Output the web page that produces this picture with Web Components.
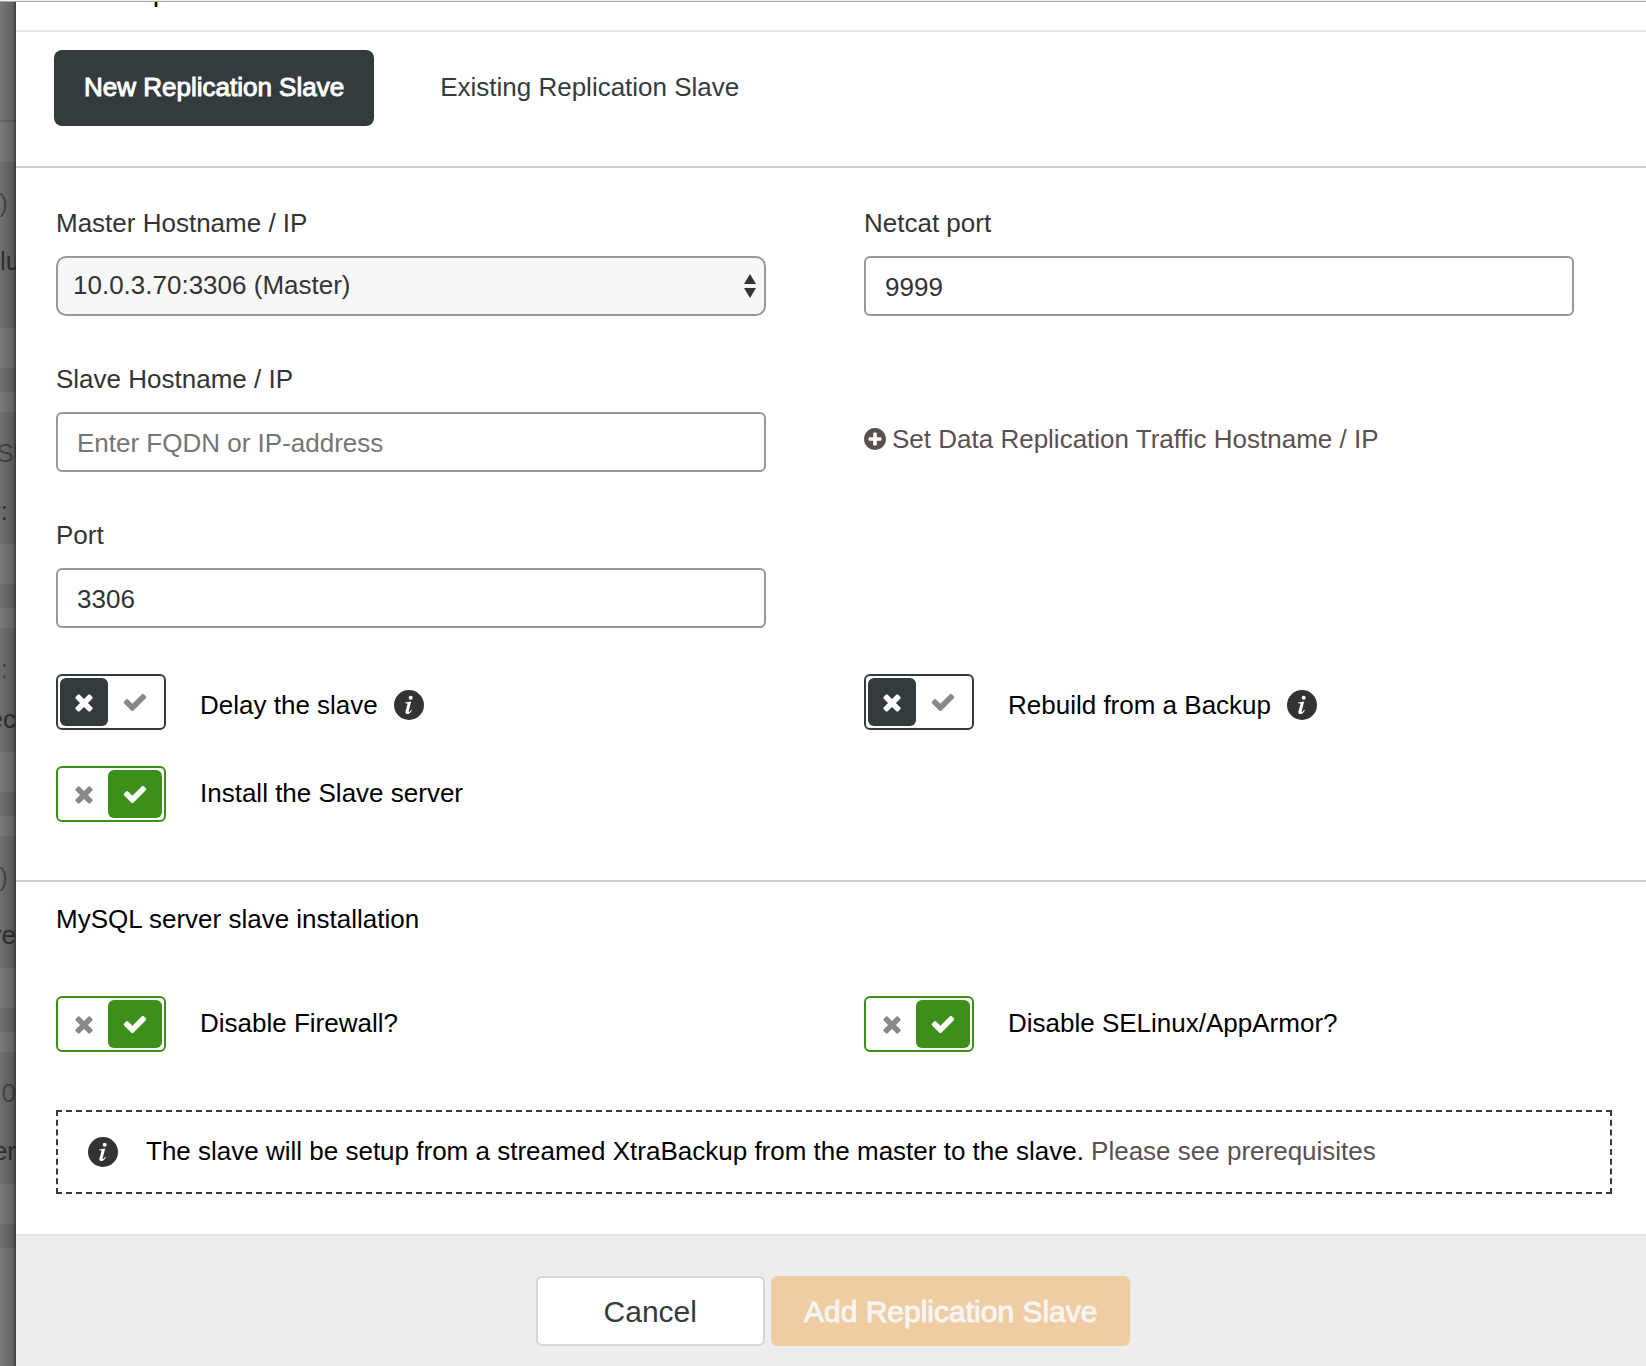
<!DOCTYPE html>
<html lang="en">
<head>
<meta charset="utf-8">
<title>Add Replication Slave</title>
<style>
  html, body { margin: 0; }
  body {
    min-height: 100vh;
    font: 26px/30px "Liberation Sans", Arial, sans-serif;
    color: #000;
    background: #fff;
  }
</style>
</head>
<body>
<replication-page>
  <backdrop-strip slot="behind"></backdrop-strip>
  <modal-panel>
    <span slot="title">Add Replication Slave</span>
    <tab-bar slot="tabs"></tab-bar>

    <form-section class="main">
      <field-grid>
        <select-field label="Master Hostname / IP" value="10.0.3.70:3306 (Master)"></select-field>
        <text-field label="Netcat port" value="9999"></text-field>
        <text-field label="Slave Hostname / IP" placeholder="Enter FQDN or IP-address"></text-field>
        <add-link>Set Data Replication Traffic Hostname / IP</add-link>
        <text-field label="Port" value="3306"></text-field>
      </field-grid>
      <toggle-grid>
        <toggle-switch info>Delay the slave</toggle-switch>
        <toggle-switch info>Rebuild from a Backup</toggle-switch>
        <toggle-switch checked>Install the Slave server</toggle-switch>
      </toggle-grid>
    </form-section>

    <form-section class="install" heading="MySQL server slave installation">
      <toggle-grid>
        <toggle-switch checked>Disable Firewall?</toggle-switch>
        <toggle-switch checked>Disable SELinux/AppArmor?</toggle-switch>
      </toggle-grid>
      <info-note>The slave will be setup from a streamed XtraBackup from the master to the slave. <a slot="link" href="#prerequisites">Please see prerequisites</a></info-note>
    </form-section>

    <modal-footer slot="footer"></modal-footer>
  </modal-panel>
</replication-page>

<script>
const define = (name, render) => customElements.define(name, class extends HTMLElement {
  connectedCallback() {
    if (this.shadowRoot) return;
    const root = this.attachShadow({ mode: 'open' });
    root.innerHTML = '<style>*{box-sizing:border-box}</style>' + render(this);
  }
});

const CROSS = 'M1490 1322q0 40-28 68l-136 136q-28 28-68 28t-68-28l-294-294-294 294q-28 28-68 28t-68-28l-136-136q-28-28-28-68t28-68l294-294-294-294q-28-28-28-68t28-68l136-136q28-28 68-28t68 28l294 294 294-294q28-28 68-28t68 28l136 136q28 28 28 68t-28 68l-294 294 294 294q28 28 28 68z';
const CHECK = 'M1671 566q0 40-28 68l-724 724-136 136q-28 28-68 28t-68-28l-136-136-362-362q-28-28-28-68t28-68l136-136q28-28 68-28t68 28l294 295 656-657q28-28 68-28t68 28l136 136q28 28 28 68z';
const PLUS = 'M1344 960v-128q0-26-19-45t-45-19h-256v-256q0-26-19-45t-45-19h-128q-26 0-45 19t-19 45v256h-256q-26 0-45 19t-19 45v128q0 26 19 45t45 19h256v256q0 26 19 45t45 19h128q26 0 45-19t19-45v-256h256q26 0 45-19t19-45zm320-64q0 209-103 385.5t-279.5 279.5-385.5 103-385.5-103-279.5-279.5-103-385.5 103-385.5 279.5-279.5 385.5-103 385.5 103 279.5 279.5 103 385.5z';

define('info-icon', () => `
  <style>:host{display:block;flex:none;width:30px;height:30px} svg{display:block}</style>
  <svg width="30" height="30" viewBox="0 0 30 30" aria-hidden="true">
    <circle cx="15" cy="15" r="15" fill="#333"/>
    <circle cx="16.7" cy="7.7" r="2" fill="#fff"/>
    <path fill="#fff" d="M11.2 12.4L17.2 11.6 14.7 21Q14.5 22.6 15.6 21.8L17.3 19.8 17.9 20.4Q15.8 24 13 24 10.9 23.9 11.5 21.2L13.4 14.4Q13.6 13.3 12.6 13.2L11 13.2Z"/>
  </svg>`);

define('replication-page', () => `
  <style>
    :host{display:flex;flex-direction:column;min-height:100vh}
    .edge{height:2px;background:#f0f0f0;border-bottom:1px solid #aaa}
    .row{display:flex;flex:1}
    main{flex:1;display:flex;flex-direction:column;min-width:0}
  </style>
  <div class="edge"></div>
  <div class="row"><slot name="behind"></slot><main><slot></slot></main></div>`);

/* Dimmed page that shows at the left of the dialog */
define('backdrop-strip', () => {
  const card = (a, ac, b, bc, size) => `
    <div class="card ${size || ''}"><span class="${ac}">${a}</span><b class="${bc}">${b}</b></div>
    <div class="light"></div><div class="dark"></div><div class="gap"></div>`;
  return `
  <style>
    :host{display:block;flex:none;width:16px;overflow:hidden;background:#7b7b7b;position:relative}
    .shade{position:absolute;inset:0;background:linear-gradient(90deg,rgba(0,0,0,0) 0,rgba(0,0,0,.22) 14px,rgba(0,0,0,.42) 14px)}
    .top{height:120px;background:#777;border-bottom:2px solid #666}
    .gap0{height:40px}
    .card{height:132px;background:#707070;padding-top:26px;display:flex;flex-direction:column;gap:28px}
    .tall{height:166px}
    .short{height:124px;gap:20px}
    span,b{display:flex;justify-content:flex-end;font-weight:400;white-space:nowrap}
    span{color:#484848} b{color:#333}
    .in{padding-right:8px}
    .start{justify-content:flex-start}
    .mid{justify-content:center}
    .light{height:40px} .dark{height:24px;background:#707070} .gap{height:20px}
  </style>
  <div class="top"></div><div class="gap0"></div>
  ${card('6)', 'in', 'lu', 'start', 'tall')}
  ${card('Sl', 'mid', 'r:', 'in')}
  ${card('l:', 'in', 'ec', '', 'short')}
  ${card(')', 'in', 've', '')}
  ${card('0', '', 'er', '')}
  <div class="shade"></div>`;
});

define('modal-panel', () => `
  <style>
    :host{display:flex;flex-direction:column;flex:1}
    header{height:30px;overflow:hidden;display:flex;align-items:flex-end;padding:0 40px 22px;border-bottom:2px solid #e5e5e5}
    h1{margin:0;font-size:29px;line-height:34px;font-weight:400}
  </style>
  <header><h1><slot name="title"></slot></h1></header>
  <slot name="tabs"></slot>
  <slot></slot>
  <slot name="footer"></slot>`);

define('tab-bar', () => `
  <style>
    :host{display:flex;gap:36px;padding:18px 38px 40px;border-bottom:2px solid #ccc}
    button{font:inherit;height:76px;padding:0 30px 2px;border:0;border-radius:8px;background:none;color:#343b3e;cursor:pointer}
    button[aria-selected=true]{background:#343b3e;color:#fff;-webkit-text-stroke:1px #fff}
  </style>
  <button type="button" role="tab" aria-selected="true">New Replication Slave</button>
  <button type="button" role="tab" aria-selected="false">Existing Replication Slave</button>`);

define('form-section', el => `
  <style>
    :host{display:block;padding:40px 34px 58px 40px}
    :host(.main){border-bottom:2px solid #ccc}
    :host(.install){padding-top:22px;padding-bottom:40px;flex:1}
    h2{margin:0 0 62px;font:inherit}
  </style>
  ${el.hasAttribute('heading') ? `<h2>${el.getAttribute('heading')}</h2>` : ''}
  <slot></slot>`);

define('field-grid', () => `
  <style>:host{display:grid;grid-template-columns:1fr 1fr;gap:48px 98px;padding-right:38px;margin-bottom:46px}</style>
  <slot></slot>`);

define('toggle-grid', () => `
  <style>:host{display:grid;grid-template-columns:1fr 1fr;gap:36px 98px;padding-right:38px}</style>
  <slot></slot>`);

define('text-field', el => `
  <style>
    :host{display:flex;flex-direction:column;gap:18px;color:#333}
    input{font:inherit;color:#333;width:100%;height:60px;padding:2px 19px 0;border:2px solid #979797;border-radius:6px;background:#fff;outline:0}
    input::placeholder{color:#757575;opacity:1}
  </style>
  <label for="f">${el.getAttribute('label')}</label>
  <input id="f" type="text" value="${el.getAttribute('value') || ''}" placeholder="${el.getAttribute('placeholder') || ''}">`);

define('select-field', el => `
  <style>
    :host{display:flex;flex-direction:column;gap:18px;color:#333}
    .box{display:grid;align-items:center}
    .box>*{grid-area:1/1}
    select{appearance:none;font:inherit;color:#333;width:100%;height:60px;padding:0 40px 2px 15px;border:2px solid #979797;border-radius:10px;background:#f7f7f7;outline:0}
    svg{justify-self:end;margin-right:10px;pointer-events:none}
  </style>
  <label for="f">${el.getAttribute('label')}</label>
  <div class="box">
    <select id="f"><option>${el.getAttribute('value')}</option></select>
    <svg width="12" height="24" viewBox="0 0 12 24" aria-hidden="true"><path fill="#333" d="M6 0L12 10H0ZM6 24L12 14H0Z"/></svg>
  </div>`);

define('add-link', () => `
  <style>
    :host{display:block;padding-top:60px}
    a{display:inline-flex;align-items:center;gap:6px;color:#5b5050;text-decoration:none}
  </style>
  <a href="#traffic"><svg width="22" height="22" viewBox="128 128 1536 1536" aria-hidden="true"><path fill="currentColor" d="${PLUS}"/></svg><span><slot></slot></span></a>`);

define('toggle-switch', el => `
  <style>
    :host{display:flex;align-items:center}
    .switch{display:grid;grid-template-columns:48px 54px;width:110px;height:56px;padding:2px;border:2px solid #343b3e;border-radius:6px;margin-right:34px;position:relative;place-items:center;color:#888}
    .cell{display:grid;place-items:center;width:100%;height:100%;border-radius:6px}
    input{position:absolute;inset:0;width:100%;height:100%;margin:0;opacity:0;cursor:pointer}
    .off{background:#343b3e;color:#fff}
    .switch:has(:checked){border-color:#3c9019}
    :checked~.off{background:none;color:#888}
    :checked~.on{background:#3c9019;color:#fff}
    label{padding-bottom:2px}
    .text{display:flex;align-items:center;gap:16px}
    :host([info]) .text{padding-top:6px}
    :host([info]) label{padding:0}
  </style>
  <div class="switch">
    <input id="t" type="checkbox" ${el.hasAttribute('checked') ? 'checked' : ''}>
    <span class="cell off"><svg width="26" height="26" viewBox="0 0 1792 1792" aria-hidden="true"><path fill="currentColor" d="${CROSS}"/></svg></span>
    <span class="cell on"><svg width="26" height="26" viewBox="0 0 1792 1792" aria-hidden="true"><path fill="currentColor" d="${CHECK}"/></svg></span>
  </div>
  <div class="text">
    <label for="t"><slot></slot></label>
    ${el.hasAttribute('info') ? '<info-icon></info-icon>' : ''}
  </div>`);

define('info-note', () => `
  <style>
    :host{display:flex;align-items:center;gap:28px;min-height:84px;margin-top:58px;padding:0 30px;border:2px dashed #343b3e;box-sizing:border-box}
    p{margin:0;padding-bottom:2px}
    ::slotted(a){color:#5b5050;text-decoration:none}
  </style>
  <info-icon></info-icon>
  <p><slot></slot><slot name="link"></slot></p>`);

define('modal-footer', () => `
  <style>
    :host{display:flex;justify-content:center;gap:6px;padding:40px 36px 20px 40px;background:#ededed;border-top:2px solid #e3e3e3}
    button{font:inherit;font-size:30px;height:70px;border-radius:6px;cursor:pointer}
    .cancel{padding:2px 66px 0;border:2px solid #d6d6d6;background:#fff;color:#343b3e}
    .add{padding:2px 33px 0;border:0;background:#eecda3;color:#f7f5f3;-webkit-text-stroke:1px #f7f5f3}
  </style>
  <button type="button" class="cancel">Cancel</button>
  <button type="button" class="add" disabled>Add Replication Slave</button>`);
</script>
</body>
</html>
